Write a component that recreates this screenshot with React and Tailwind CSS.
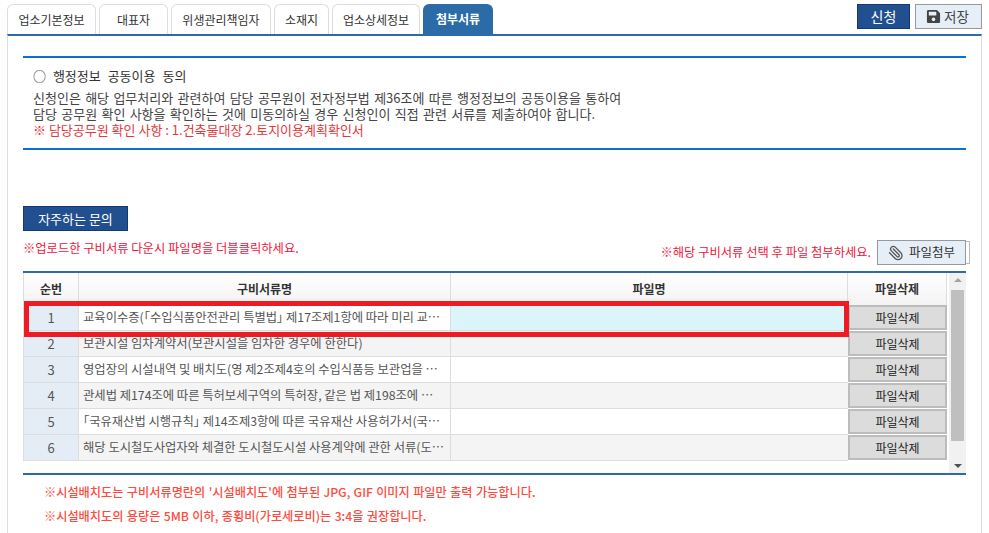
import React from 'react';
import { Paperclip } from 'lucide-react';
import { FaSave } from 'react-icons/fa';

const tabs = [
  { label: '업소기본정보', width: 'w-[89px]' },
  { label: '대표자', width: 'w-[69px]' },
  { label: '위생관리책임자', width: 'w-[100px]' },
  { label: '소재지', width: 'w-[55px]' },
  { label: '업소상세정보', width: 'w-[88px]' },
];

// the corner brackets are full width in Noto, palt pulls them in
const Br = ({ children }) => <span className="[font-feature-settings:'palt']">{children}</span>;

const rows = [
  <>교육이수증(<Br>「</Br>수입식품안전관리 특별법<Br>」</Br> 제17조제1항에 따라 미리 교…</>,
  <>보관시설 임차계약서(보관시설을 임차한 경우에 한한다)</>,
  <>영업장의 시설내역 및 배치도(영 제2조제4호의 수입식품등 보관업을 …</>,
  <>관세법 제174조에 따른 특허보세구역의 특허장, 같은 법 제198조에 …</>,
  <><Br>「</Br>국유재산법 시행규칙<Br>」</Br> 제14조제3항에 따른 국유재산 사용허가서(국…</>,
  <>해당 도시철도사업자와 체결한 도시철도시설 사용계약에 관한 서류(도…</>,
];

const App = () => {
  return (
    <div className="relative w-[989px] h-[533px] overflow-hidden bg-white text-[12px] text-[#444] font-['Noto_Sans_CJK_KR','Noto_Sans',sans-serif]">
      {/* Top tabs */}
      <div className="flex items-end justify-between h-[34px] px-[7px]">
        <div className="flex gap-[3px] h-[30px]">
          {tabs.map((t) => (
            <div key={t.label} className={`${t.width} flex items-center justify-center rounded-t-[6px] border border-b-0 border-[#ddd] text-[#333]`}>
              {t.label}
            </div>
          ))}
          <div className="w-[70px] flex items-center justify-center rounded-t-[6px] bg-[#2b6ca8] font-bold text-white">
            첨부서류
          </div>
        </div>
        <div className="flex gap-[5px] self-start mt-[4px]">
          <div className="w-[53px] h-[25px] flex items-center justify-center bg-[#214f90] border border-[#123a72] text-white text-[14px]">신청</div>
          <div className="w-[67px] h-[25px] flex items-center justify-center gap-[3px] bg-[#e6eff8] border border-[#999] text-[13.5px] text-[#444]">
            <FaSave size={15} className="text-[#444] -ml-[2px]" />
            저장
          </div>
        </div>
      </div>

      {/* Panel */}
      <div className="mx-[7px] h-[499px] border-t-2 border-l border-r border-t-[#2b6ca8] border-x-[#ddd] px-[15px] pt-[20px]">
        <div className="border-y-2 border-[#0e6fcf] h-[94px] pl-[10px] pt-[8px]">
          <p className="text-[13px] leading-[20px] text-[#333] [word-spacing:4px]">○ 행정정보 공동이용 동의</p>
          <p className="text-[13px] leading-[16px] mt-[4px] [word-spacing:1.4px]">신청인은 해당 업무처리와 관련하여 담당 공무원이 전자정부법 제36조에 따른 행정정보의 공동이용을 통하여</p>
          <p className="text-[13px] leading-[16px] [word-spacing:1.4px]">담당 공무원 확인 사항을 확인하는 것에 미동의하실 경우 신청인이 직접 관련 서류를 제출하여야 합니다.</p>
          <p className="text-[13px] leading-[16px] text-[#e5383b]">※ 담당공무원 확인 사항 : 1.건축물대장 2.토지이용계획확인서</p>
        </div>

        <div className="mt-[56px] w-[105px] h-[25px] flex items-center justify-center bg-[#214f90] border border-[#123a72] text-white text-[13px]">
          자주하는 문의
        </div>

        <div className="flex justify-between items-start h-[40px] w-[947px]">
          <p className="mt-[9px] text-[#f0143c] text-[12.3px] leading-[16px]">※업로드한 구비서류 다운시 파일명을 더블클릭하세요.</p>
          <div className="flex items-center mt-[9px]">
            <p className="text-[#f0143c] text-[12.3px] mr-[6px]">※해당 구비서류 선택 후 파일 첨부하세요.</p>
            <div className="w-[89px] h-[25px] flex items-center justify-center gap-[5px] bg-[#e6eff8] border border-[#999] text-[#333] text-[12.5px]">
              <Paperclip size={16} className="-scale-x-100 text-[#555]" />
              파일첨부
            </div>
            <div className="w-[4px] h-[23px] border border-l-0 border-[#bbb]" />
          </div>
        </div>

        {/* Document table */}
        <div className="w-[943px] h-[204px] border-y-2 border-[#2b6ca8] flex">
          <div className="w-[926px]">
            <div className="flex h-[32px] w-[924px] font-bold text-[12px] text-[#333] bg-gradient-to-b from-white to-[#f3f3f3] border-x border-[#ddd]">
              <div className="w-[55px] flex items-center justify-center border-r border-[#ddd]">순번</div>
              <div className="w-[372px] flex items-center justify-center border-r border-[#ddd]">구비서류명</div>
              <div className="w-[397px] flex items-center justify-center border-r border-[#ddd]">파일명</div>
              <div className="flex-1 flex items-center justify-center">파일삭제</div>
            </div>
            {rows.map((name, i) => (
              <div key={i} className="flex h-[26px]">
                <div className={`flex w-[825px] shrink-0 border-b border-[#ddd] ${i % 2 === 1 ? 'bg-[#f4f4f4]' : 'bg-white'}`}>
                  <div className="w-[56px] shrink-0 flex items-center justify-center bg-[#e4edf6] border-x border-[#ddd] text-[13px] text-[#555]">{i + 1}</div>
                  <div className="w-[372px] shrink-0 flex items-center px-[4px] border-r border-[#ddd] text-[12.3px] text-[#555] whitespace-nowrap">
                    <span>{name}</span>
                  </div>
                  <div className={`flex-1 ${i === 0 ? 'bg-[#dcf5fb]' : ''}`} />
                </div>
                <div className="w-[99px] h-[25px] flex items-center justify-center bg-[#dcdcdc] border-2 border-[#bcbcbc] text-[#222]">파일삭제</div>
              </div>
            ))}
          </div>
          {/* Scrollbar */}
          <div className="w-[17px] h-full bg-[#f1f1f1] flex flex-col items-center justify-between py-[5px] relative">
            <div className="w-0 h-0 border-x-[4px] border-x-transparent border-b-[4px] border-b-[#a3a3a3]" />
            <div className="absolute left-[2px] right-[2px] top-[17px] h-[151px] bg-[#bfbfbf]" />
            <div className="w-0 h-0 border-x-[4px] border-x-transparent border-t-[4px] border-t-[#505050]" />
          </div>
        </div>

        <div className="pl-[21px] mt-[5px] text-[#ff4b3e] font-medium text-[12.2px] [word-spacing:0.6px]">
          <p className="leading-[24px]">※시설배치도는 구비서류명란의 '시설배치도'에 첨부된 JPG, GIF 이미지 파일만 출력 가능합니다.</p>
          <p className="leading-[24px]">※시설배치도의 용량은 5MB 이하, 종횡비(가로세로비)는 3:4을 권장합니다.</p>
        </div>
      </div>

      {/* Red highlight over first row */}
      <div className="absolute left-[24px] top-[301px] w-[825px] h-[36px] border-[5px] border-[#ed1c24]" />
    </div>
  );
};

export default App;
